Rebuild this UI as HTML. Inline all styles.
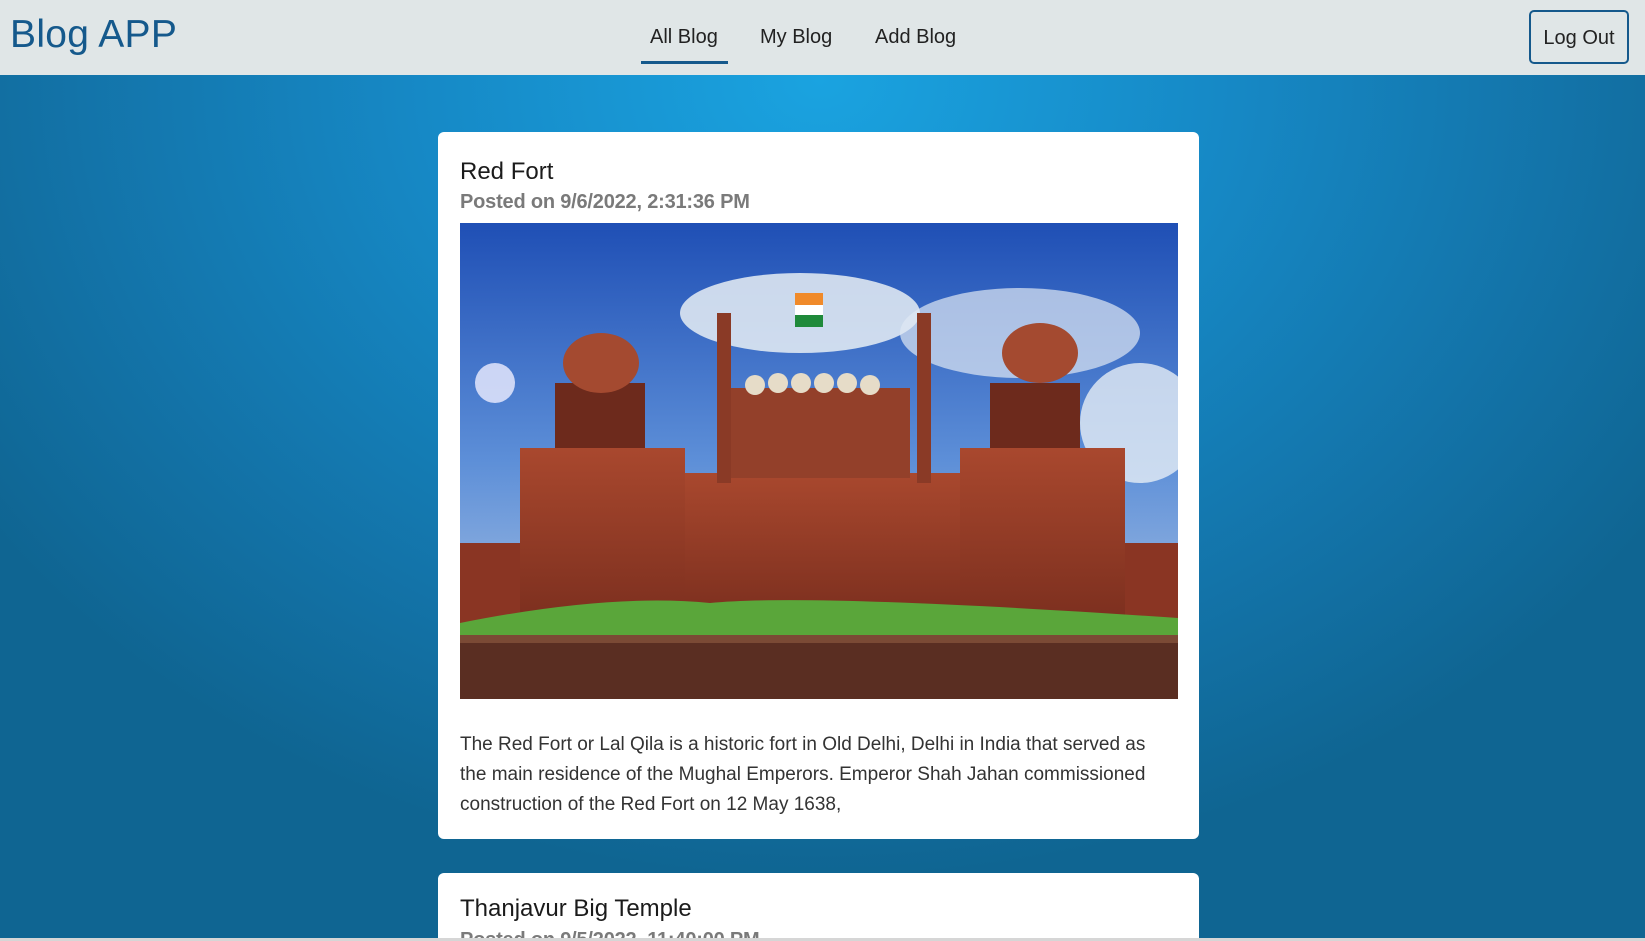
<!DOCTYPE html>
<html style="height:941px;overflow:hidden"><head><meta charset="utf-8"><style>
*{box-sizing:border-box;margin:0;padding:0}
body{width:1645px;height:941px;overflow:hidden;font-family:"Liberation Sans",sans-serif;background:radial-gradient(ellipse 1000px 800px at 820px 80px,#1aa3e0 0%,#1689c6 40%,#1373a8 75%,#0f6592 100%);position:relative}
.nav{position:absolute;left:0;top:0;width:1645px;height:75px;background:#e0e6e7}
.logo{position:absolute;left:10px;top:13px;font-size:39px;color:#15598c;letter-spacing:.3px}
.links a{position:absolute;top:26px;font-size:20px;color:#222;text-decoration:none}
.ul{position:absolute;left:641px;top:61px;width:87px;height:3px;background:#15598c}
.btn{position:absolute;left:1529px;top:10px;width:100px;height:54px;border:2px solid #15598c;border-radius:5px;font-size:20px;color:#222;text-align:center;line-height:52px}
.card{position:absolute;left:438px;width:761px;background:#fff;border-radius:6px}
.t{position:absolute;left:22px;font-size:24px;color:#1b1b1b}
.s{position:absolute;left:22px;font-size:20px;color:#7a7a7a;font-weight:bold;letter-spacing:-.2px}
.p{position:absolute;left:22px;top:598px;width:705px;font-size:19px;line-height:30px;color:#333}
.img{position:absolute;left:22px;top:91px;width:718px;height:476px;overflow:hidden}
</style></head><body>
<div class="nav">
<div class="logo">Blog APP</div>
<div class="links"><a style="left:650px">All Blog</a><a style="left:760px">My Blog</a><a style="left:875px">Add Blog</a></div>
<div class="ul"></div>
<div class="btn">Log Out</div>
</div>
<div class="card" style="top:132px;height:707px">
<div class="t" style="top:26px">Red Fort</div>
<div class="s" style="top:59px">Posted on 9/6/2022, 2:31:36 PM</div>
<div class="img">
<svg width="718" height="476" viewBox="0 0 718 476">
<defs><linearGradient id="sky" x1="0" y1="0" x2="0" y2="1"><stop offset="0" stop-color="#1f4fb5"/><stop offset=".5" stop-color="#5d8fd8"/><stop offset="1" stop-color="#b9cde6"/></linearGradient>
<linearGradient id="fort" x1="0" y1="0" x2="0" y2="1"><stop offset="0" stop-color="#a9482e"/><stop offset="1" stop-color="#7a2e1e"/></linearGradient></defs>
<rect width="718" height="476" fill="url(#sky)"/>
<ellipse cx="340" cy="90" rx="120" ry="40" fill="#e8eef5" opacity=".85"/>
<ellipse cx="560" cy="110" rx="120" ry="45" fill="#dfe8f3" opacity=".7"/>
<ellipse cx="680" cy="200" rx="60" ry="60" fill="#e6edf5" opacity=".8"/>
<ellipse cx="35" cy="160" rx="20" ry="20" fill="#eef" opacity=".8"/>
<rect x="0" y="320" width="718" height="80" fill="#8a3523"/>
<rect x="60" y="225" width="165" height="180" fill="url(#fort)"/>
<rect x="500" y="225" width="165" height="180" fill="url(#fort)"/>
<rect x="225" y="250" width="275" height="150" fill="url(#fort)"/>
<rect x="270" y="165" width="180" height="90" fill="#93402a"/>
<rect x="257" y="90" width="14" height="170" fill="#8a3a26"/>
<rect x="457" y="90" width="14" height="170" fill="#8a3a26"/>
<rect x="95" y="160" width="90" height="65" fill="#6d2a1c"/>
<rect x="530" y="160" width="90" height="65" fill="#6d2a1c"/>
<ellipse cx="141" cy="140" rx="38" ry="30" fill="#a44a30"/>
<ellipse cx="580" cy="130" rx="38" ry="30" fill="#a44a30"/>
<g fill="#e6dcc8"><circle cx="295" cy="162" r="10"/><circle cx="318" cy="160" r="10"/><circle cx="341" cy="160" r="10"/><circle cx="364" cy="160" r="10"/><circle cx="387" cy="160" r="10"/><circle cx="410" cy="162" r="10"/></g>
<rect x="335" y="70" width="28" height="12" fill="#f08a2a"/><rect x="335" y="82" width="28" height="10" fill="#fff"/><rect x="335" y="92" width="28" height="12" fill="#1f8a3a"/>
<path d="M0 400 Q150 370 250 380 Q350 370 718 395 L718 420 L0 420Z" fill="#5aa63a"/>
<rect x="0" y="412" width="718" height="64" fill="#5a2e22"/>
<rect x="0" y="412" width="718" height="8" fill="#7b4a35"/>
</svg>
</div>
<div class="p">The Red Fort or Lal Qila is a historic fort in Old Delhi, Delhi in India that served as the main residence of the Mughal Emperors. Emperor Shah Jahan commissioned construction of the Red Fort on 12 May 1638,</div>
</div>
<div class="card" style="top:873px;height:66px;border-radius:6px 6px 0 0;overflow:hidden">
<div class="t" style="top:22px">Thanjavur Big Temple</div>
<div class="s" style="top:56px">Posted on 9/5/2022, 11:40:00 PM</div>
</div>
<div style="position:absolute;left:0;top:938px;width:1645px;height:3px;background:#d6d6d6"></div>
</body></html>
